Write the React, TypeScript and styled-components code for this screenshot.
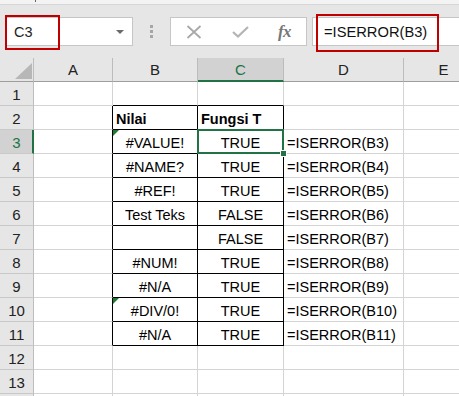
import React from "react";
import styled, { createGlobalStyle, css } from "styled-components";

const GlobalStyle = createGlobalStyle`
  html, body { margin: 0; padding: 0; background: #ffffff; overflow: hidden; }
  body { font-family: "Liberation Sans", Arial, sans-serif; }
`;

const FONT = `"Liberation Sans", Arial, sans-serif`;
const GREEN = "#217346";
const GRID = "#d4d4d4";
const HEADER_BG = "#e6e6e6";
const HEADER_SEL = "#d2d2d2";

const Window = styled.div`
  width: 459px;
  height: 396px;
  overflow: hidden;
  display: flex;
  flex-direction: column;
  background: #ffffff;
`;

const TopStrip = styled.div`
  height: 4px;
  flex: none;
  background: #f3f3f3;
  border-bottom: 1px solid #d6d6d6;
  padding-left: 35px;
`;

const Tick = styled.span`
  display: block;
  width: 1px;
  height: 2px;
  background: #666;
`;

const Toolbar = styled.div`
  height: 53px;
  flex: none;
  background: ${HEADER_BG};
  display: flex;
  align-items: center;
  padding-left: 5px;
  box-sizing: border-box;
`;

const NameBox = styled.div`
  position: relative;
  width: 128px;
  height: 29px;
  box-sizing: border-box;
  background: #fff;
  border: 1px solid #c6c6c6;
  display: flex;
  align-items: center;
  justify-content: space-between;
  padding: 0 8px 0 8px;
  font-family: ${FONT};
  font-size: 14.5px;
  color: #222;
`;

const Highlight = styled.span<{ $left: number; $top: number; $w: number; $h: number }>`
  position: absolute;
  left: ${(p) => p.$left}px;
  top: ${(p) => p.$top}px;
  width: ${(p) => p.$w}px;
  height: ${(p) => p.$h}px;
  box-sizing: border-box;
  border: 2px solid #c00000;
  pointer-events: none;
`;

const DropArrow = styled.span`
  width: 0;
  height: 0;
  border-left: 4px solid transparent;
  border-right: 4px solid transparent;
  border-top: 4px solid #6a6a6a;
  margin-top: 1px;
`;

const Dots = styled.div`
  width: 37px;
  display: flex;
  flex-direction: column;
  align-items: center;
  gap: 2px;
`;

const Dot = styled.span`
  width: 3px;
  height: 3px;
  background: #a6a6a6;
`;

const ButtonBox = styled.div`
  width: 137px;
  height: 29px;
  box-sizing: border-box;
  background: #fff;
  border: 1px solid #c6c6c6;
  display: grid;
  grid-template-columns: 46px 46px 43px;
  align-items: center;
  justify-items: center;
`;

const Fx = styled.span`
  font-family: "Liberation Serif", "Times New Roman", serif;
  font-style: italic;
  font-weight: bold;
  font-size: 17px;
  color: #777;
  letter-spacing: -0.5px;
`;

const FormulaBox = styled.div`
  position: relative;
  margin-left: 5px;
  flex: 1;
  height: 29px;
  box-sizing: border-box;
  background: #fff;
  border: 1px solid #c6c6c6;
  border-right: none;
  display: flex;
  align-items: center;
  padding-left: 11px;
  font-family: ${FONT};
  font-size: 14.7px;
  color: #111;
`;

const Sheet = styled.div`
  display: grid;
  grid-template-columns: 34px 79px 85px 86px 120px 80px;
  grid-auto-rows: 24px;
  font-family: ${FONT};
  font-size: 14.5px;
  color: #000;
`;

const Corner = styled.div`
  position: relative;
  background: ${HEADER_BG};
  box-sizing: border-box;
  border-right: 1px solid #bdbdbd;
  border-bottom: 1px solid #9e9e9e;
  &::after {
    content: "";
    position: absolute;
    right: 1px;
    bottom: 2px;
    width: 0;
    height: 0;
    border-left: 17px solid transparent;
    border-bottom: 16px solid #b7b7b7;
  }
`;

const ColHeader = styled.div<{ $sel?: boolean }>`
  box-sizing: border-box;
  background: ${(p) => (p.$sel ? HEADER_SEL : HEADER_BG)};
  border-right: 1px solid #bcbcbc;
  border-bottom: ${(p) => (p.$sel ? `2px solid ${GREEN}` : "1px solid #9e9e9e")};
  display: flex;
  align-items: center;
  justify-content: center;
  padding-top: ${(p) => (p.$sel ? 1 : 0)}px;
  color: ${(p) => (p.$sel ? GREEN : "#222")};
  font-size: 15px;
`;

const RowHeader = styled.div<{ $sel?: boolean }>`
  box-sizing: border-box;
  background: ${(p) => (p.$sel ? HEADER_SEL : HEADER_BG)};
  border-right: ${(p) => (p.$sel ? `2px solid ${GREEN}` : "1px solid #bdbdbd")};
  border-bottom: 1px solid #c9c9c9;
  display: flex;
  align-items: center;
  justify-content: center;
  padding-top: 1px;
  padding-left: ${(p) => (p.$sel ? 1 : 0)}px;
  color: ${(p) => (p.$sel ? GREEN : "#222")};
  font-size: 15px;
`;

type Align = "left" | "center";

const Cell = styled.div<{
  $align: Align;
  $bold?: boolean;
  $br?: boolean;
  $bb?: boolean;
  $flag?: boolean;
  $sel?: boolean;
}>`
  position: relative;
  box-sizing: border-box;
  border-right: 1px solid ${(p) => (p.$br ? "#000" : GRID)};
  border-bottom: 1px solid ${(p) => (p.$bb ? "#000" : GRID)};
  padding: 4px 3px 0 3px;
  line-height: 19px;
  text-align: ${(p) => p.$align};
  font-weight: ${(p) => (p.$bold ? 700 : 400)};
  white-space: nowrap;
  ${(p) =>
    p.$flag &&
    css`
      &::before {
        content: "";
        position: absolute;
        left: 0;
        top: 0;
        width: 0;
        height: 0;
        border-top: 6px solid #1e7b34;
        border-right: 6px solid transparent;
      }
    `}
  ${(p) =>
    p.$sel &&
    css`
      z-index: 2;
      &::after {
        content: "";
        position: absolute;
        left: -1px;
        top: -1px;
        right: -1px;
        bottom: -1px;
        border: 2px solid ${GREEN};
        box-sizing: border-box;
      }
    `}
`;

const FillHandle = styled.span`
  position: absolute;
  right: -4px;
  bottom: -4px;
  width: 5px;
  height: 5px;
  background: ${GREEN};
  border: 1px solid #fff;
  z-index: 3;
`;

const XIcon = () => (
  <svg width="16" height="14" viewBox="0 0 16 14">
    <path d="M1.5 1 L14.5 13 M14.5 1 L1.5 13" stroke="#a8a8a8" strokeWidth="1.8" fill="none" />
  </svg>
);

const CheckIcon = () => (
  <svg width="17" height="12" viewBox="0 0 17 12">
    <path d="M1 6 L6 10.5 L16 1" stroke="#b4b4b4" strokeWidth="2.2" fill="none" />
  </svg>
);

const COLS = ["A", "B", "C", "D", "E"];

type Row = { b?: string; c?: string; d?: string; bold?: boolean; flag?: boolean };

const DATA: Record<number, Row> = {
  2: { b: "Nilai", c: "Fungsi T", bold: true },
  3: { b: "#VALUE!", c: "TRUE", d: "=ISERROR(B3)", flag: true },
  4: { b: "#NAME?", c: "TRUE", d: "=ISERROR(B4)" },
  5: { b: "#REF!", c: "TRUE", d: "=ISERROR(B5)" },
  6: { b: "Test Teks", c: "FALSE", d: "=ISERROR(B6)" },
  7: { b: "", c: "FALSE", d: "=ISERROR(B7)" },
  8: { b: "#NUM!", c: "TRUE", d: "=ISERROR(B8)" },
  9: { b: "#N/A", c: "TRUE", d: "=ISERROR(B9)" },
  10: { b: "#DIV/0!", c: "TRUE", d: "=ISERROR(B10)", flag: true },
  11: { b: "#N/A", c: "TRUE", d: "=ISERROR(B11)" },
};

const inBox = (r: number) => r >= 2 && r <= 11;

export default function App() {
  const rows = Array.from({ length: 14 }, (_, i) => i + 1);
  return (
    <>
      <GlobalStyle />
      <Window>
        <TopStrip>
          <Tick />
        </TopStrip>
        <Toolbar>
          <NameBox>
            <span>C3</span>
            <DropArrow />
            <Highlight $left={-1} $top={-3} $w={55} $h={35} />
          </NameBox>
          <Dots>
            <Dot />
            <Dot />
            <Dot />
          </Dots>
          <ButtonBox>
            <XIcon />
            <CheckIcon />
            <Fx>fx</Fx>
          </ButtonBox>
          <FormulaBox>
            =ISERROR(B3)
            <Highlight $left={3} $top={-4} $w={123} $h={38} />
          </FormulaBox>
        </Toolbar>
        <Sheet>
          <Corner />
          {COLS.map((c) => (
            <ColHeader key={c} $sel={c === "C"}>
              {c}
            </ColHeader>
          ))}
          {rows.map((r) => {
            const d = DATA[r] || {};
            const align: Align = d.bold ? "left" : "center";
            return (
              <React.Fragment key={r}>
                <RowHeader $sel={r === 3}>{r <= 13 ? r : ""}</RowHeader>
                <Cell $align="left" $br={inBox(r)} />
                <Cell $align={align} $bold={d.bold} $br={inBox(r)} $bb={inBox(r) || r === 1} $flag={d.flag}>
                  {d.b}
                </Cell>
                <Cell $align={align} $bold={d.bold} $br={inBox(r)} $bb={inBox(r) || r === 1} $sel={r === 3}>
                  {d.c}
                  {r === 3 && <FillHandle />}
                </Cell>
                <Cell $align="left">{d.d}</Cell>
                <Cell $align="left" />
              </React.Fragment>
            );
          })}
        </Sheet>
      </Window>
    </>
  );
}
